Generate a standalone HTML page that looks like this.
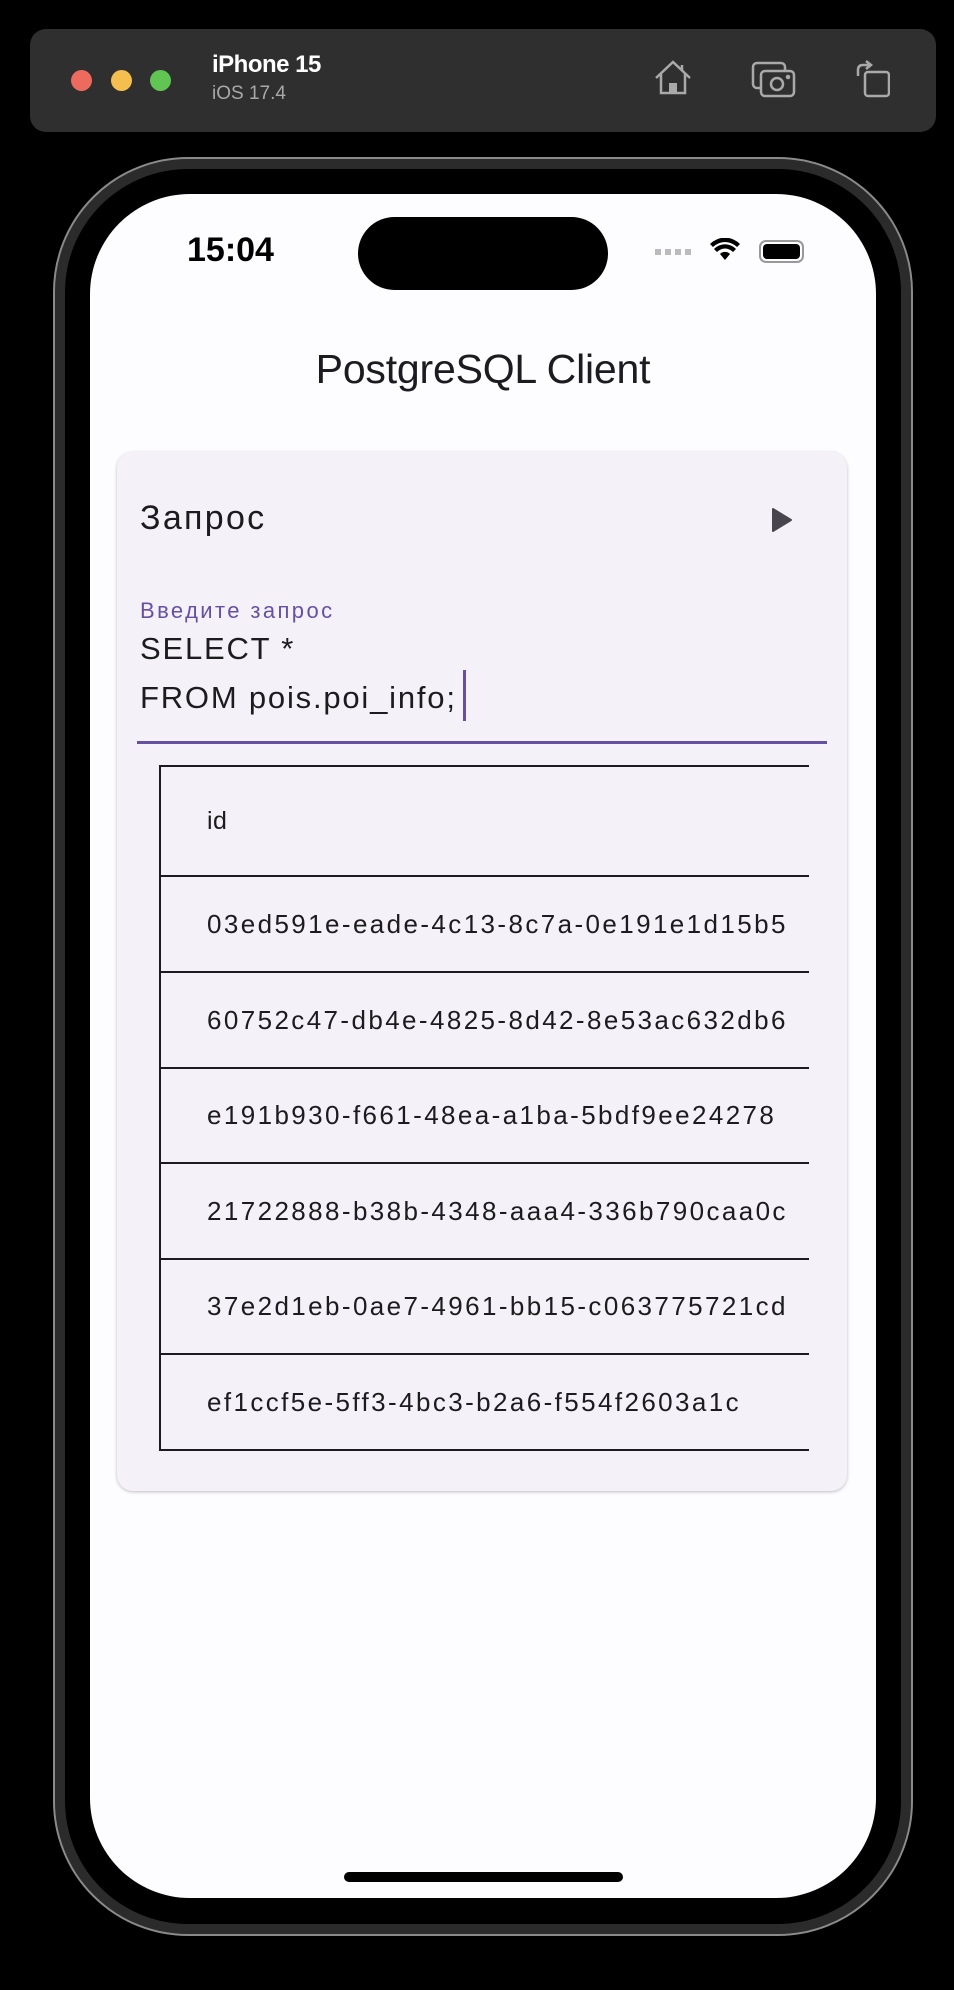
<!DOCTYPE html>
<html><head><meta charset="utf-8"><style>
*{margin:0;padding:0;box-sizing:border-box}
body{width:954px;height:1990px;background:#000;position:relative;overflow:hidden;font-family:"Liberation Sans","Noto Sans CJK SC",sans-serif}
.abs{position:absolute}
.bar{left:30px;top:29px;width:906px;height:103px;background:#2f2f2f;border-radius:16px}
.dot{width:21px;height:21px;border-radius:50%;top:70px}
.frame{left:53px;top:157px;width:860px;height:1779px;border-radius:135px;background:#000;border:2px solid #8a8a8a;box-shadow:inset 0 0 0 10px #2b2b2b}
.screen{left:90px;top:194px;width:786px;height:1704px;border-radius:100px;background:#fdfcff;overflow:hidden}
.card{left:27px;top:258px;width:730px;height:1039px;background:#f4f2f8;border-radius:16px;box-shadow:0 1px 3px rgba(0,0,0,.25)}
.row{position:absolute;left:0;width:100%;border-bottom:2px solid #1c1b1f;font-size:26px;letter-spacing:2.4px;color:#1c1b1f;padding-left:46px;white-space:nowrap}
</style></head><body>
<div class="abs bar"></div>
<div class="abs dot" style="left:71px;background:#ed6a5e"></div>
<div class="abs dot" style="left:111px;background:#f5bf4f"></div>
<div class="abs dot" style="left:150px;background:#61c554"></div>
<div class="abs" style="left:212px;top:51px;color:#fff;font-weight:bold;font-size:24px;letter-spacing:-0.5px">iPhone 15</div>
<div class="abs" style="left:212px;top:83px;color:#a8a8a8;font-size:19px">iOS 17.4</div>
<svg class="abs" style="left:650px;top:56px" width="240" height="44" viewBox="0 0 240 44" fill="none" stroke="#a9a9a9" stroke-width="2.5">
<path d="M6 22 L23 6 L40 22 M11 18 V37 H35 V18 M32 9 V14"/><rect x="19" y="27" width="8" height="10" fill="#a9a9a9" stroke="none"/>
<rect x="103" y="7" width="32" height="25" rx="4"/><rect x="111" y="15" width="33" height="25" rx="4" fill="#2f2f2f"/><circle cx="127" cy="28" r="6"/><circle cx="138" cy="21" r="1" fill="#a9a9a9"/>
<rect x="215" y="16" width="24" height="24" rx="3"/><path d="M208 20 V14 Q208 9 213 9 H220 M216 5 L221 9 L216 13"/>
</svg>
<div class="abs frame"></div>
<div class="abs screen">
 <div class="abs" style="left:97px;top:37px;font-size:34px;font-weight:bold;color:#000">15:04</div>
 <div class="abs" style="left:268px;top:23px;width:250px;height:73px;border-radius:37px;background:#000"></div>
 <div class="abs" style="left:565px;top:55px;width:38px;height:6px;background:repeating-linear-gradient(90deg,#bbb 0 6px,transparent 6px 10px)"></div>
 <svg class="abs" style="left:620px;top:44px" width="30" height="24" viewBox="0 0 30 24"><path d="M15 22 L10 16 A7 7 0 0 1 20 16Z M4 11 A15 15 0 0 1 26 11 L23 14 A11 11 0 0 0 7 14Z M0 6 A21 21 0 0 1 30 6 L27 9 A17 17 0 0 0 3 9Z" fill="#000"/></svg>
 <div class="abs" style="left:669px;top:46px;width:45px;height:23px;border:2px solid #999;border-radius:7px;padding:2px"><div style="width:100%;height:100%;background:#000;border-radius:4px"></div></div>
 <div class="abs" style="left:0;top:152px;width:786px;text-align:center;font-size:41px;color:#1c1b1f;letter-spacing:-0.2px">PostgreSQL Client</div>
 <div class="abs card">
  <div class="abs" style="left:23px;top:47px;font-size:34px;color:#1c1b1f;letter-spacing:2.3px">Запрос</div>
  <svg class="abs" style="left:653px;top:55px" width="24" height="26" viewBox="0 0 24 26"><path d="M3 2 L21 13 L3 24Z" fill="#49454f" stroke="#49454f" stroke-width="2" stroke-linejoin="round"/></svg>
  <div class="abs" style="left:23px;top:146px;font-size:22px;color:#6750a4;letter-spacing:2.4px">Введите запрос</div>
  <div class="abs" style="left:23px;top:172px;font-size:31px;color:#1c1b1f;line-height:49px;letter-spacing:1.8px">SELECT *<br>FROM pois.poi_info;</div>
  <div class="abs" style="left:346px;top:218px;width:3px;height:51px;background:#6750a4"></div>
  <div class="abs" style="left:20px;top:289px;width:690px;height:3px;background:#6750a4"></div>
  <div class="abs" style="left:42px;top:313px;width:650px;height:686px;border-left:2px solid #1c1b1f;border-top:2px solid #1c1b1f;overflow:hidden">
   <div class="row" style="top:0;height:110px;line-height:108px;font-size:25px;letter-spacing:0.5px;font-weight:500">id</div>
   <div class="row" style="top:110px;height:96px;line-height:94px">03ed591e-eade-4c13-8c7a-0e191e1d15b5</div>
   <div class="row" style="top:206px;height:96px;line-height:94px">60752c47-db4e-4825-8d42-8e53ac632db6</div>
   <div class="row" style="top:302px;height:95px;line-height:93px">e191b930-f661-48ea-a1ba-5bdf9ee24278</div>
   <div class="row" style="top:397px;height:96px;line-height:94px">21722888-b38b-4348-aaa4-336b790caa0c</div>
   <div class="row" style="top:493px;height:95px;line-height:93px">37e2d1eb-0ae7-4961-bb15-c063775721cd</div>
   <div class="row" style="top:588px;height:96px;line-height:94px">ef1ccf5e-5ff3-4bc3-b2a6-f554f2603a1c</div>
  </div>
 </div>
 <div class="abs" style="left:254px;top:1678px;width:279px;height:10px;border-radius:5px;background:#000"></div>
</div>
</body></html>
